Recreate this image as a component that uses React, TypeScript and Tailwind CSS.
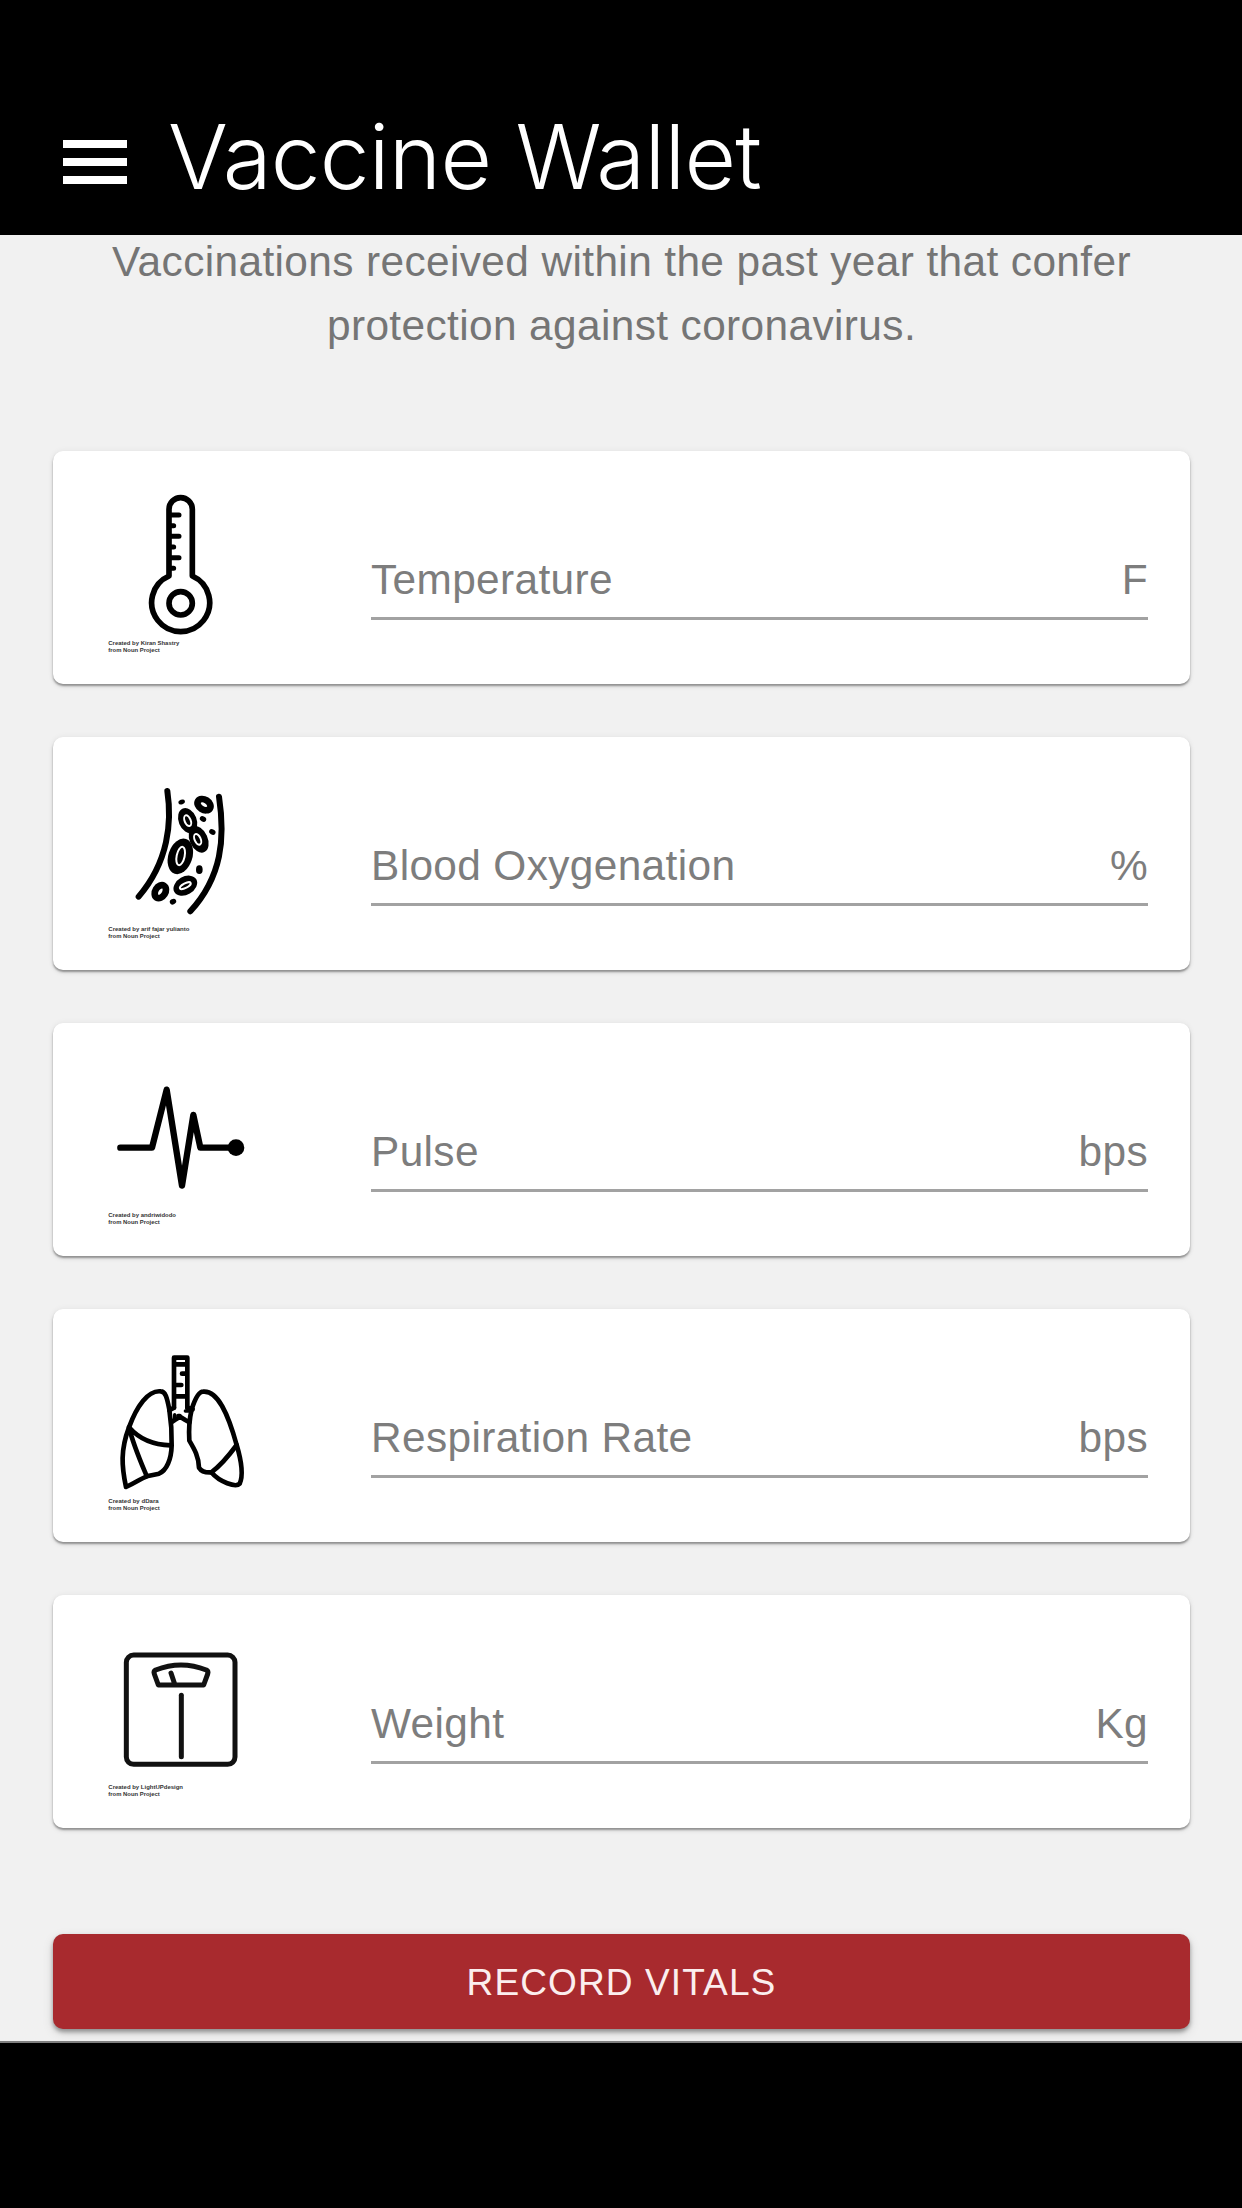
import type { ReactNode } from "react";

type Vital = {
  label: string;
  unit: string;
  author: string;
  creditWidth: number;
  offset: number;
  icon: ReactNode;
};

const Thermometer = () => (
  <g strokeWidth="17">
    <path d="M237 288V88a35 35 0 0 1 70 0V288A87 87 0 1 1 237 288Z" />
    <circle cx="272" cy="370" r="35" />
    <path d="M240 105h27M240 137h11M240 169h27M240 201h11M240 233h27M240 265h11" strokeWidth="15" />
  </g>
);

const BloodVessel = () => (
  <g>
    <path d="M232 63C246 155 236 275 146 380M387 80C406 205 396 320 301 424" strokeWidth="18" />
    <g strokeWidth="20">
      <ellipse cx="342" cy="104" rx="21" ry="15" transform="rotate(32 342 104)" />
      <ellipse cx="211" cy="365" rx="21" ry="15" transform="rotate(-58 211 365)" />
    </g>
    <g fill="black" stroke="none">
      <ellipse cx="293" cy="152" rx="27" ry="39" transform="rotate(-22 293 152)" />
      <ellipse cx="326" cy="208" rx="27" ry="42" transform="rotate(-24 326 208)" />
      <ellipse cx="271" cy="259" rx="36" ry="55" transform="rotate(18 271 259)" />
      <ellipse cx="286" cy="347" rx="38" ry="27" transform="rotate(-30 286 347)" />
      <ellipse cx="275" cy="96" rx="10" ry="7" transform="rotate(-20 275 96)" />
      <ellipse cx="339" cy="147" rx="10" ry="8" transform="rotate(30 339 147)" />
      <ellipse cx="367" cy="186" rx="10" ry="8" transform="rotate(30 367 186)" />
      <ellipse cx="328" cy="299" rx="10" ry="13" />
      <ellipse cx="249" cy="395" rx="10" ry="8" transform="rotate(-30 249 395)" />
    </g>
    <g stroke="white" strokeWidth="6">
      <ellipse cx="293" cy="152" rx="9" ry="17" transform="rotate(-22 293 152)" />
      <ellipse cx="323" cy="208" rx="9" ry="17" transform="rotate(-24 323 208)" />
      <ellipse cx="272" cy="258" rx="12" ry="28" transform="rotate(12 272 258)" />
      <ellipse cx="286" cy="347" rx="18" ry="7" transform="rotate(-28 286 347)" />
    </g>
  </g>
);

const Heartbeat = () => (
  <g>
    <path d="M91 263H186L230 89 276 377 310 165 331 263H425" strokeWidth="19" />
    <circle cx="438" cy="263" r="25" fill="black" stroke="none" />
  </g>
);

const Lungs = () => (
  <g strokeWidth="14">
    <path d="M252 203V53H292V203M252 73H292M276 101H292M252 135H274M252 169H292" />
    <path d="M252 203L238 211M292 203L308 208M244 247L254 240 270 230 286 240 298 247" />
    <path d="M254 224V236M264 226H270M286 213H296" strokeWidth="10" />
    <path d="M238 209C231 172 226 154 212 154C174 150 140 199 117 262C91 330 95 380 108 441C145 424 160 411 174 408L207 401C230 391 244 358 245 316C246 270 242 235 238 209Z" />
    <path d="M305 208C315 177 326 155 339 155C384 150 415 224 440 315C455 365 461 405 449 431C438 443 389 427 364 397C348 398 335 396 327 383C326 350 314 329 298 302C296 270 298 237 305 208Z" />
    <path d="M117 262C150 300 190 315 242 316M117 262C130 315 152 365 170 408M440 315C418 345 390 378 364 397" />
  </g>
);

const Scale = () => (
  <g stroke="#111" strokeWidth="15">
    <rect x="109" y="75" width="326" height="328" rx="22" />
    <path d="M197 120Q273 90 349 120Q356 124 353 132L341 165H205L193 132Q190 124 197 120ZM243 129L254 162" />
    <path d="M274 196V380" />
  </g>
);

const vitals: Vital[] = [
  { label: "Temperature", unit: "F", author: "Kiran Shastry", creditWidth: 213, offset: 87, icon: <Thermometer /> },
  { label: "Blood Oxygenation", unit: "%", author: "arif fajar yulianto", creditWidth: 243, offset: 99, icon: <BloodVessel /> },
  { label: "Pulse", unit: "bps", author: "andriwidodo", creditWidth: 203, offset: 111, icon: <Heartbeat /> },
  { label: "Respiration Rate", unit: "bps", author: "dDara", creditWidth: 151, offset: 93, icon: <Lungs /> },
  { label: "Weight", unit: "Kg", author: "LightUPdesign", creditWidth: 224, offset: 105, icon: <Scale /> },
];

function VitalIcon({ vital }: { vital: Vital }) {
  return (
    <svg
      width="180"
      height="233"
      viewBox="0 0 540 699"
      fill="none"
      stroke="black"
      strokeLinecap="round"
      strokeLinejoin="round"
      className="ml-[37px] shrink-0"
    >
      <g transform={`translate(0 ${vital.offset})`}>{vital.icon}</g>
      <g fill="#333" stroke="none" fontSize="17" fontWeight="700">
        <text x="55" y="583" textLength={vital.creditWidth} lengthAdjust="spacingAndGlyphs">
          Created by {vital.author}
        </text>
        <text x="55" y="602" textLength="154" lengthAdjust="spacingAndGlyphs">
          from Noun Project
        </text>
      </g>
    </svg>
  );
}

function VitalCard({ vital }: { vital: Vital }) {
  return (
    <div className="flex h-[233px] rounded-[10px] bg-white pr-[42px] shadow-[0_2px_2px_rgba(0,0,0,0.34),0_3px_5px_rgba(0,0,0,0.08),0_0_6px_rgba(0,0,0,0.06)]">
      <VitalIcon vital={vital} />
      <div className="ml-[101px] mt-[98px] flex h-[71px] grow items-start justify-between border-b-[3px] border-[#a2a2a2] text-[42.4px] leading-[61px] tracking-[0.36px] text-[#7d7d7d]">
        <span>{vital.label}</span>
        <span>{vital.unit}</span>
      </div>
    </div>
  );
}

export default function App() {
  return (
    <div className="flex h-[2208px] w-[1242px] flex-col overflow-hidden bg-[#f1f1f1] font-['Liberation_Sans',sans-serif]">
      <header className="flex h-[235px] shrink-0 items-start bg-black pl-[63px] text-white">
        <button aria-label="Menu" className="mt-[140px] flex w-[64px] flex-col gap-[10px]">
          <span className="h-[8px] bg-white" />
          <span className="h-[8px] bg-white" />
          <span className="h-[8px] bg-white" />
        </button>
        <h1 className="ml-[41px] mt-[102px] whitespace-nowrap font-[Inter,sans-serif] text-[89px] font-light leading-[110px] tracking-[-0.75px]">
          Vaccine Wallet
        </h1>
      </header>
      <main className="flex h-[1806px] shrink-0 flex-col pl-[53px] pr-[52px]">
        <p className="-mt-[5px] h-[221px] whitespace-nowrap text-center text-[42.4px] leading-[63.6px] tracking-[0.38px] text-[#757575]">
          Vaccinations received within the past year that confer
          <br />
          protection against coronavirus.
        </p>
        <div className="flex flex-col gap-[53px]">
          {vitals.map((vital) => (
            <VitalCard key={vital.label} vital={vital} />
          ))}
        </div>
        <button className="mt-[106px] h-[95px] shrink-0 rounded-[10px] bg-[#a82a2e] pt-[2px] text-[37.1px] tracking-[1.06px] text-[#fbeeee] shadow-[0_3px_4px_rgba(0,0,0,0.35),0_4px_12px_rgba(0,0,0,0.12)]">
          RECORD VITALS
        </button>
      </main>
      <footer className="grow border-t-2 border-[#808080] bg-black" />
    </div>
  );
}
